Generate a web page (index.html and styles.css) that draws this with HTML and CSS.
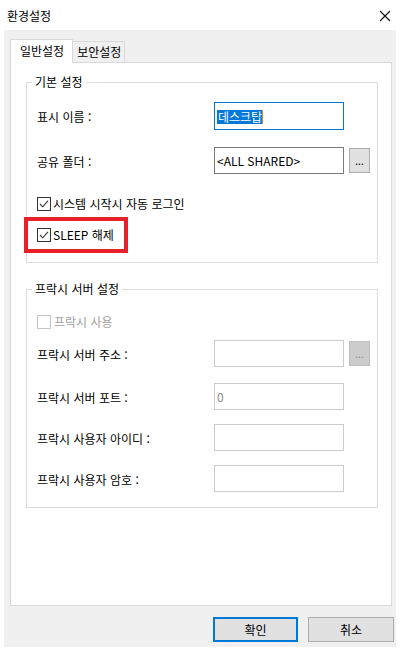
FILE: index.html
```html
<!DOCTYPE html>
<html lang="ko">
<head>
  <meta charset="UTF-8" />
  <meta name="viewport" content="width=device-width, initial-scale=1.0"/>
  <title>환경설정</title>
  <link rel="stylesheet" href="styles.css">
</head>
<body>
  <div class="titlebar">
    <span class="title">환경설정</span>
    <svg class="close" width="12" height="12" viewBox="0 0 12 12">
      <path d="M1 1 L11 11 M11 1 L1 11" stroke="#111" stroke-width="1.1" fill="none"/>
    </svg>
  </div>

  <div class="window">
    <div class="tabs">
      <div class="tab active">일반설정</div>
      <div class="tab">보안설정</div>
    </div>

    <div class="panel">
      <fieldset class="group basic">
        <legend>기본 설정</legend>
        <div class="row first">
          <label>표시 이름 :</label>
          <div class="field focused"><span class="sel">데스크탑</span><span class="caret"></span></div>
        </div>
        <div class="row second">
          <label>공유 폴더 :</label>
          <div class="field">&lt;ALL SHARED&gt;</div>
          <button class="browse">...</button>
        </div>
        <div class="check autologin">
          <svg class="box" width="14" height="14" viewBox="0 0 14 14">
            <rect x="0.5" y="0.5" width="13" height="13" fill="#fff" stroke="#333"/>
            <path d="M3 7 L5.7 9.8 L11 3.8" stroke="#333" stroke-width="1.1" fill="none"/>
          </svg>
          <span>시스템 시작시 자동 로그인</span>
        </div>
        <div class="check sleep">
          <svg class="box" width="14" height="14" viewBox="0 0 14 14">
            <rect x="0.5" y="0.5" width="13" height="13" fill="#fff" stroke="#333"/>
            <path d="M3 7 L5.7 9.8 L11 3.8" stroke="#333" stroke-width="1.1" fill="none"/>
          </svg>
          <span>SLEEP 해제</span>
          <span class="highlight"></span>
        </div>
      </fieldset>

      <fieldset class="group proxy">
        <legend>프락시 서버 설정</legend>
        <div class="check disabled">
          <svg class="box" width="14" height="14" viewBox="0 0 14 14">
            <rect x="0.5" y="0.5" width="13" height="13" fill="#fff" stroke="#c4c4c4"/>
          </svg>
          <span>프락시 사용</span>
        </div>
        <div class="row addr">
          <label>프락시 서버 주소 :</label>
          <div class="field off"></div>
          <button class="browse off">...</button>
        </div>
        <div class="row port">
          <label>프락시 서버 포트 :</label>
          <div class="field off"><span class="dim">0</span></div>
        </div>
        <div class="row user">
          <label>프락시 사용자 아이디 :</label>
          <div class="field off"></div>
        </div>
        <div class="row user">
          <label>프락시 사용자 암호 :</label>
          <div class="field off"></div>
        </div>
      </fieldset>
    </div>

    <div class="actions">
      <button class="btn primary">확인</button>
      <button class="btn">취소</button>
    </div>
  </div>
</body>
</html>
```

FILE: styles.css
```css
body {
  margin: 0;
  background: #fff;
  font-family: "Noto Sans CJK KR", "Liberation Sans", sans-serif;
  font-size: 12px;
  color: #000;
}
.titlebar {
  height: 30px;
  display: flex;
  align-items: center;
  justify-content: space-between;
  padding: 2px 9px 0 7px;
  box-sizing: border-box;
}
.title {
  line-height: 16px;
}
.window {
  margin: 0 4px 4px;
  width: 392px;
  height: 617px;
  background: #f0f0f0;
  padding: 9px 4px 0 6px;
  box-sizing: border-box;
}
.tabs {
  display: flex;
  align-items: flex-end;
  margin-bottom: -1px;
  position: relative;
  z-index: 1;
}
.tab {
  height: 20px;
  line-height: 20px;
  padding: 0 3px 0 4px;
  border: 1px solid #d9d9d9;
  border-left: none;
  border-bottom: none;
  margin-bottom: 1px;
  background: #f0f0f0;
}
.tab.active {
  height: 23px;
  line-height: 22px;
  padding: 0 8px 0 9px;
  border-left: 1px solid #d9d9d9;
  margin-bottom: 0;
  background: #fff;
}
.panel {
  background: #fff;
  border: 1px solid #d9d9d9;
  height: 544px;
  box-sizing: border-box;
  padding: 11px 0 0 15px;
}
.group {
  width: 352px;
  box-sizing: border-box;
  margin: 0;
  padding: 0 0 20px 10px;
  border: 1px solid #dcdcdc;
}
.group legend {
  margin-left: -5px;
  padding: 0 3px;
  line-height: 16px;
}
.basic {
  padding-top: 12px;
}
.proxy {
  margin-top: 18px;
  padding-top: 18px;
  padding-bottom: 15px;
}
.row {
  display: flex;
  align-items: center;
}
.row label {
  width: 177px;
  flex-shrink: 0;
  line-height: 16px;
  padding-top: 2px;
}
.field {
  width: 130px;
  height: 27px;
  box-sizing: border-box;
  border: 1px solid #7a7a7a;
  background: #fff;
  display: flex;
  align-items: center;
  padding-left: 2px;
  line-height: 14px;
}
.field.focused {
  height: 28px;
  border-color: #0078d7;
  padding-top: 1px;
}
.field.off {
  border-color: #cccccc;
}
.sel {
  background: #0078d7;
  color: #fff;
  line-height: 14px;
  padding-left: 1px;
}
.caret {
  width: 1px;
  height: 14px;
  background: #e08a2a;
}
.dim {
  color: #8a8a8a;
}
.browse {
  margin-left: 5px;
  width: 21px;
  height: 25px;
  padding: 0;
  border: 1px solid #adadad;
  background: #e1e1e1;
  font-family: inherit;
  font-size: 10px;
  color: #000;
}
.browse.off {
  background: #cccccc;
  border-color: #bfbfbf;
  color: #8d8d8d;
}
.row.second {
  margin-top: 17px;
}
.row.addr {
  margin-top: 11px;
}
.row.port {
  margin-top: 16px;
}
.row.user {
  margin-top: 14px;
}
.check {
  display: flex;
  align-items: center;
  height: 14px;
  line-height: 14px;
  position: relative;
}
.check .box {
  margin-right: 2px;
  flex-shrink: 0;
}
.check.autologin {
  margin-top: 23px;
}
.check.sleep {
  margin-top: 17px;
}
.check.disabled {
  color: #a0a0a0;
}
.check.disabled .box {
  margin-right: 3px;
}
/* 강조 표시(빨간 테두리) */
.highlight {
  position: absolute;
  left: -13px;
  top: -11px;
  width: 104px;
  height: 36px;
  box-sizing: border-box;
  border: 4px solid #e8202a;
}
.actions {
  display: flex;
  justify-content: flex-end;
  gap: 10px;
  margin-top: 11px;
  margin-right: -2px;
}
.btn {
  width: 86px;
  height: 25px;
  box-sizing: border-box;
  border: 1px solid #adadad;
  background: #e1e1e1;
  font-family: inherit;
  font-size: 12px;
  color: #000;
  padding: 0;
}
.btn.primary {
  width: 85px;
  border: 2px solid #0078d7;
}
```
